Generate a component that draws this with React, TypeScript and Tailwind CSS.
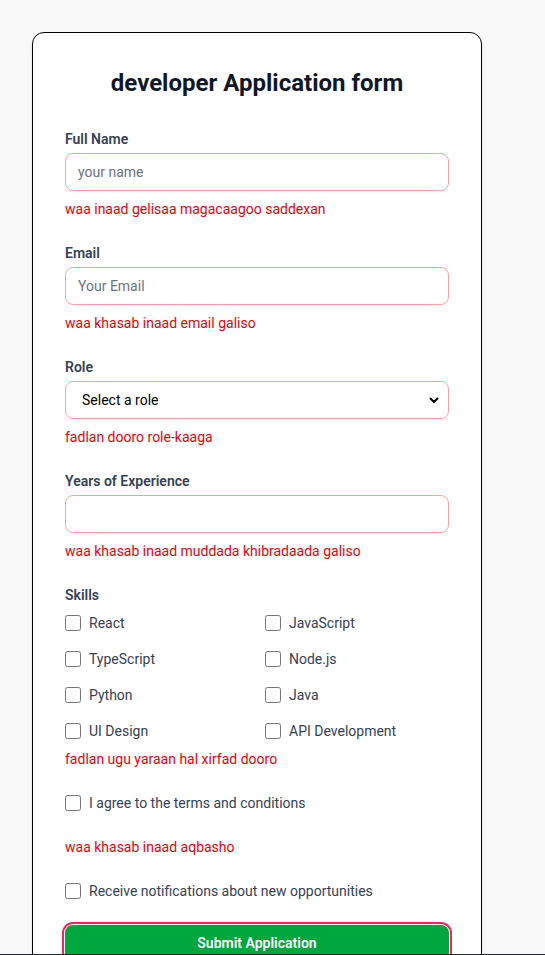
import { useState } from "react";

const skills = [
  "React",
  "JavaScript",
  "TypeScript",
  "Node.js",
  "Python",
  "Java",
  "UI Design",
  "API Development",
];

function Field({
  label,
  placeholder,
  error,
  type = "text",
}: {
  label: string;
  placeholder?: string;
  error: string;
  type?: string;
}) {
  return (
    <div className="mb-6">
      <label className="block text-sm font-semibold text-gray-700 mb-1">{label}</label>
      <input
        type={type}
        placeholder={placeholder}
        className="w-full px-3 py-2 text-sm border border-red-300 rounded-lg outline-none placeholder:text-gray-500"
      />
      <p className="mt-2 text-sm text-red-600">{error}</p>
    </div>
  );
}

export default function App() {
  const [selected, setSelected] = useState<string[]>([]);

  const toggle = (s: string) =>
    setSelected((prev) => (prev.includes(s) ? prev.filter((x) => x !== s) : [...prev, s]));

  return (
    <div className="min-h-screen bg-[#f9f9f9] pt-8 pl-8 font-['Roboto',sans-serif]">
      <div className="w-[450px] bg-white border border-black rounded-xl shadow-md p-8 pt-[33px]">
        <h1 className="text-2xl font-bold text-gray-900 text-center mt-px mb-[30px]">
          developer Application form
        </h1>

        <Field label="Full Name" placeholder="your name" error="waa inaad gelisaa magacaagoo saddexan" />
        <Field label="Email" placeholder="Your Email" type="email" error="waa khasab inaad email galiso" />

        {/* Role */}
        <div className="mb-6">
          <label className="block text-sm font-semibold text-gray-700 mb-1">Role</label>
          <div className="relative">
            <select className="w-full appearance-none bg-white pl-4 pr-8 py-2 text-sm text-black border border-red-300 rounded-lg outline-none">
              <option>Select a role</option>
              <option>Frontend Developer</option>
              <option>Backend Developer</option>
              <option>Full Stack Developer</option>
            </select>
            <svg
              className="absolute right-[9px] top-1/2 -translate-y-1/2 w-3 h-3 pointer-events-none"
              viewBox="0 0 12 12"
              fill="none"
              stroke="black"
              strokeWidth="2"
              strokeLinecap="round"
              strokeLinejoin="round"
            >
              <path d="M2.5 4.5 6 8l3.5-3.5" />
            </svg>
          </div>
          <p className="mt-2 text-sm text-red-600">fadlan dooro role-kaaga</p>
        </div>

        <Field label="Years of Experience" type="number" error="waa khasab inaad muddada khibradaada galiso" />

        {/* Skills */}
        <div className="mb-6">
          <label className="block text-sm font-semibold text-gray-700 mb-2">Skills</label>
          <div className="grid grid-cols-2 gap-4">
            {skills.map((s) => (
              <label key={s} className="flex items-center text-sm text-gray-700">
                <input
                  type="checkbox"
                  checked={selected.includes(s)}
                  onChange={() => toggle(s)}
                  className="w-4 h-4 m-0"
                />
                <span className="ml-2">{s}</span>
              </label>
            ))}
          </div>
          <p className="mt-2 text-sm text-red-600">fadlan ugu yaraan hal xirfad dooro</p>
        </div>

        <div className="mb-6">
          <label className="flex items-center text-sm text-gray-700">
            <input type="checkbox" className="w-4 h-4 m-0" />
            <span className="ml-2">I agree to the terms and conditions</span>
          </label>
          <p className="mt-6 text-sm text-red-600">waa khasab inaad aqbasho</p>
        </div>

        <div className="mb-6">
          <label className="flex items-center text-sm text-gray-700">
            <input type="checkbox" className="w-4 h-4 m-0" />
            <span className="ml-2">Receive notifications about new opportunities</span>
          </label>
        </div>

        <button
          type="submit"
          className="w-full py-2 text-sm font-semibold text-white bg-[#00a63e] rounded-lg ring-2 ring-[#f5245a] ring-offset-1"
        >
          Submit Application
        </button>
      </div>
      <div className="fixed bottom-0 left-0 right-0 h-px bg-gray-800" />
    </div>
  );
}
